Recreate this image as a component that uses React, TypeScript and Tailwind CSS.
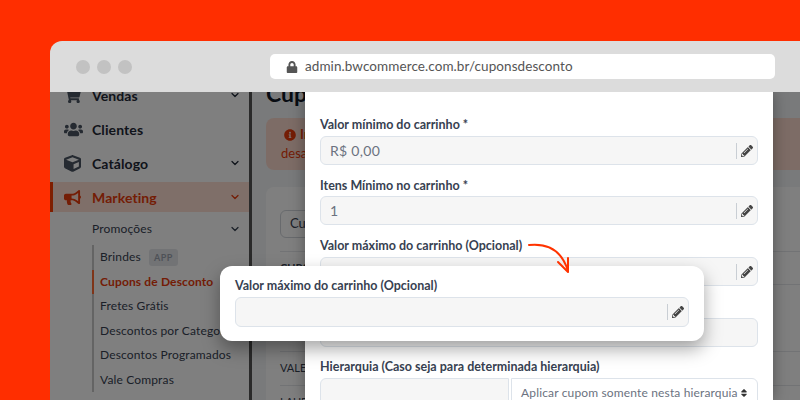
import { ChevronDown } from 'lucide-react';
import {
  FaBullhorn,
  FaCube,
  FaInfoCircle,
  FaLock,
  FaPencilAlt,
  FaShoppingCart,
  FaSort,
  FaUsers,
} from 'react-icons/fa';

const font = { fontFamily: 'Lato, "Noto Sans", sans-serif' };

function MenuRow({ icon, label, chevron, active }: { icon: React.ReactNode; label: string; chevron?: boolean; active?: boolean }) {
  return (
    <div className={`flex items-center pr-[8px] ${active ? 'my-[2px] h-[30px] border-l-[3px] border-[#ff3d00] bg-[#ffdfd3] pl-[11px] text-[#e83a0a]' : 'h-[34px] pl-[14px] text-[#1f2937]'}`}>
      <span className={`flex w-[28px] justify-start text-[17px] ${active ? 'text-[#e83a0a]' : 'text-[#4b5563]'}`}>{icon}</span>
      <span className="flex-1 text-[14px] font-bold tracking-[0.1px]">{label}</span>
      {chevron && <ChevronDown size={12} strokeWidth={2.5} />}
    </div>
  );
}

function SubItem({ children, active }: { children: React.ReactNode; active?: boolean }) {
  return (
    <div className={`-ml-[2px] flex h-[24.5px] items-center gap-[8px] whitespace-nowrap border-l-2 pl-[6px] text-[12px] tracking-[0.15px] ${active ? 'border-[#ff6a33] font-bold text-[#e83a0a]' : 'border-transparent text-[#374151]'}`}>
      {children}
    </div>
  );
}

function PencilInput({ value, h = 'h-[29px]', pencil = true }: { value?: string; h?: string; pencil?: boolean }) {
  return (
    <div className={`flex ${h} items-center rounded-[6px] border border-[#dde3ea] bg-[#f6f6f6] pl-[9px] pr-[4px] text-[14px] tracking-[0.3px] text-[#6b7280]`}>
      <span className="flex-1">{value}</span>
      {pencil && (
        <>
          <span className="mr-[4px] h-[16px] w-px bg-[#c9ced4]" />
          <FaPencilAlt size={12} className="text-[#444]" />
        </>
      )}
    </div>
  );
}

function Label({ children }: { children: React.ReactNode }) {
  return <div className="h-[18px] whitespace-nowrap text-[12.5px] font-bold leading-[18px] text-[#374151]">{children}</div>;
}

export default function App() {
  return (
    <div className="h-[400px] w-[800px] overflow-hidden bg-[#ff2e00] pl-[50px] pt-[41px]" style={font}>
      <div className="flex h-[359px] flex-col overflow-hidden rounded-tl-[12px]">
        <div className="flex h-[51px] shrink-0 items-center bg-[#dcdcdc] pl-[26px] pr-[25px]">
          <div className="flex gap-[7px]">
            <span className="h-[14px] w-[14px] rounded-full bg-[#c2c2c2]" />
            <span className="h-[14px] w-[14px] rounded-full bg-[#c2c2c2]" />
            <span className="h-[14px] w-[14px] rounded-full bg-[#c2c2c2]" />
          </div>
          <div className="ml-[138px] flex h-[25px] flex-1 items-center rounded-[5px] bg-white pl-[16px] text-[#555]">
            <FaLock size={12} />
            <span className="ml-[7px] text-[13.5px] tracking-[0.08px]">admin.bwcommerce.com.br/cuponsdesconto</span>
          </div>
        </div>

        <div className="relative flex flex-1 overflow-hidden bg-white">
          {/* sidebar */}
          <div className="-mt-[14px] w-[202px] shrink-0 border-r-[3px] border-[#555]">
            <MenuRow icon={<FaShoppingCart />} label="Vendas" chevron />
            <MenuRow icon={<FaUsers size={19} />} label="Clientes" />
            <MenuRow icon={<FaCube />} label="Catálogo" chevron />
            <MenuRow icon={<FaBullhorn />} label="Marketing" chevron active />
            <div className="mt-[1px] flex h-[30px] items-center pl-[42px] pr-[8px] text-[12px] tracking-[0.15px] text-[#374151]">
              <span className="flex-1">Promoções</span>
              <ChevronDown size={12} strokeWidth={2.5} />
            </div>
            <div className="ml-[42px] mt-[1px] border-l-2 border-[#c9c9c9]">
              <SubItem>
                Brindes
                <span className="rounded-[3px] bg-[#e5e7eb] px-[5px] py-[2px] text-[9px] font-bold tracking-[0.5px] text-[#9ca3af]">APP</span>
              </SubItem>
              <SubItem active>Cupons de Desconto</SubItem>
              <SubItem>Fretes Grátis</SubItem>
              <SubItem>Descontos por Categoria</SubItem>
              <SubItem>Descontos Programados</SubItem>
              <SubItem>Vale Compras</SubItem>
            </div>
          </div>

          {/* page behind the modal */}
          <div className="-mt-[14px] min-w-0 flex-1 bg-[#f3f4f6] pl-[14px]">
            <div className="h-[40px] text-[23px] font-bold leading-[30px] text-[#111827]">Cupons</div>
            <div className="h-[52px] whitespace-nowrap rounded-l-[8px] bg-[#fbd9cd] pl-[15px] pt-[7px] text-[13px] leading-[19px] text-[#e83a0a]">
              <div className="flex items-center gap-[4px] pl-[3px]">
                <FaInfoCircle size={12} />
                <span className="font-bold">Importante:</span>
              </div>
              <div>desativar</div>
            </div>
            <div className="mt-[17px] rounded-tl-[8px] bg-white pl-[14px] pt-[23px] text-[11px] text-[#374151]">
              <div className="flex h-[28px] w-[120px] items-center rounded-[6px] border border-[#d1d5db] pl-[9px] text-[13px]">Cupom</div>
              <div className="mt-[13px] flex h-[33px] items-center border-t border-[#e5e7eb] font-bold">CUPOM</div>
              <div className="h-[67px] border-t border-[#e5e7eb]" />
              <div className="flex h-[34px] items-center border-t border-[#e5e7eb]">VALE</div>
              <div className="flex h-[34px] items-center border-t border-[#e5e7eb]">LAURA</div>
            </div>
          </div>

          {/* backdrop */}
          <div className="absolute inset-0 bg-black/50" />

          {/* modal */}
          <div className="absolute bottom-0 left-[255px] top-0 w-[468px] bg-white px-[15px] pt-[24px] shadow-[0_0_14px_rgba(0,0,0,0.35)]">
            <Label>Valor mínimo do carrinho *</Label>
            <div className="mt-[2px]"><PencilInput value="R$ 0,00" /></div>
            <div className="mt-[12px]"><Label>Itens Mínimo no carrinho *</Label></div>
            <div className="mt-[1px]"><PencilInput value="1" /></div>
            <div className="mt-[12px]"><Label>Valor máximo do carrinho (Opcional)</Label></div>
            <div className="mt-[2px]"><PencilInput /></div>
            <div className="mt-[32px]"><PencilInput pencil={false} /></div>
            <div className="mt-[11px]"><Label>Hierarquia (Caso seja para determinada hierarquia)</Label></div>
            <div className="mt-[2px] flex gap-[2px]">
              <div className="h-[30px] w-[190px] rounded-l-[6px] border border-[#dde3ea] bg-[#f6f6f6]" />
              <div className="flex h-[30px] w-[248px] items-center rounded-r-[6px] border border-[#dde3ea] pl-[9px] pr-[8px] text-[12px] tracking-[0.15px] text-[#6b7280]">
                <span className="flex-1 whitespace-nowrap">Aplicar cupom somente nesta hierarquia</span>
                <FaSort size={10} className="text-[#333]" />
              </div>
            </div>
          </div>

          {/* highlighted field */}
          <div className="absolute left-[170px] top-[174px] h-[75px] w-[484px] rounded-[12px] bg-white px-[15px] pt-[11px] shadow-[0_8px_18px_rgba(0,0,0,0.35)]">
            <Label>Valor máximo do carrinho (Opcional)</Label>
            <div className="mt-[2px]"><PencilInput h="h-[30px]" /></div>
          </div>

          {/* arrow */}
          <svg className="absolute left-[478px] top-[151px]" width="44" height="34" viewBox="0 0 44 34" fill="none" stroke="#ff3300" strokeWidth="2" strokeLinecap="round" strokeLinejoin="round">
            <path d="M1 2C20 0 34 8 40 28" />
            <path d="M30 19L40 29L40 15" />
          </svg>
        </div>
      </div>
    </div>
  );
}
